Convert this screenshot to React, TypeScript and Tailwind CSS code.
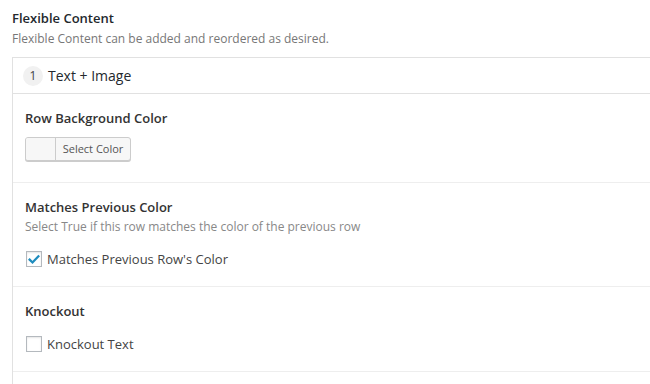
import React from "react";

const font = { fontFamily: '"Open Sans", "Noto Sans", sans-serif' };

function Checkbox({ checked }: { checked?: boolean }) {
  return (
    <span className="flex h-4 w-4 items-center justify-center border border-[#b4b9be] bg-white shadow-[inset_0_1px_2px_rgba(0,0,0,0.1)]">
      {checked ? (
        <svg viewBox="0 0 16 16" className="h-[15px] w-[15px]">
          <path
            d="M3 8.2 L6.3 11.4 L13 4.3"
            fill="none"
            stroke="#1e8cbe"
            strokeWidth="2.6"
            strokeLinecap="square"
          />
        </svg>
      ) : null}
    </span>
  );
}

export default function App() {
  return (
    <div className="h-[384px] w-[650px] overflow-hidden bg-white pl-3 text-[13px] text-[#444]" style={font}>
      <div className="pt-[9px] text-[13px] font-semibold leading-[18px] text-[#23282d]">Flexible Content</div>
      <div className="mt-[3px] text-[12px] leading-[18px] text-[#777]">
        Flexible Content can be added and reordered as desired.
      </div>

      <div className="mt-[9px] w-[700px] border border-[#e1e1e1]">
        {/* layout header */}
        <div className="flex h-[36px] items-center border-b border-[#e1e1e1] pl-[10px]">
          <span className="flex h-5 w-5 items-center justify-center rounded-full bg-[#f1f1f1] text-[12px] text-[#444]">
            1
          </span>
          <span className="ml-[5px] text-[14px] text-[#23282d]">Text + Image</span>
        </div>

        {/* row background color */}
        <div className="border-b border-[#eee] px-3 pt-[15px] pb-[21px]">
          <div className="font-semibold leading-[18px] text-[#333]">Row Background Color</div>
          <div className="mt-[10px] flex h-6 w-[106px] overflow-hidden rounded-[3px] border border-[#ccc] bg-[#f7f7f7] shadow-[0_1px_0_#ccc]">
            <span className="w-[30px] border-r border-[#ccc] bg-[#f7f7f7]" />
            <span className="flex flex-1 items-center justify-center text-[11px] text-[#555]">Select Color</span>
          </div>
        </div>

        {/* matches previous color */}
        <div className="border-b border-[#eee] px-3 pt-[15px] pb-[18px]">
          <div className="font-semibold leading-[18px] text-[#333]">Matches Previous Color</div>
          <div className="mt-[2px] text-[12px] leading-[18px] text-[#888]">
            Select True if this row matches the color of the previous row
          </div>
          <label className="mt-[14px] ml-px flex items-center gap-[5px] leading-[18px] text-[#444]">
            <Checkbox checked />
            <span>Matches Previous Row's Color</span>
          </label>
        </div>

        {/* knockout */}
        <div className="border-b border-[#eee] px-3 pt-[15px] pb-[18px]">
          <div className="font-semibold leading-[18px] text-[#333]">Knockout</div>
          <label className="mt-[15px] ml-px flex items-center gap-[5px] leading-[18px] text-[#444]">
            <Checkbox />
            <span>Knockout Text</span>
          </label>
        </div>
        <div className="h-10" />
      </div>
    </div>
  );
}
